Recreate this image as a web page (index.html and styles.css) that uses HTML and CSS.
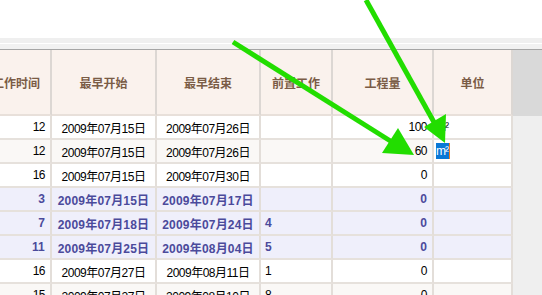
FILE: index.html
```html
<!DOCTYPE html>
<html>
<head>
<meta charset="utf-8">
<link rel="stylesheet" href="styles.css">
</head>
<body>
<div class="top"></div>
<div class="strip1"></div>
<div class="strip-gap"></div>
<div class="strip2"></div>
<div class="area">
  <div class="grid">
    <div class="row head">
      <div class="c">工作时间</div>
      <div class="c">最早开始</div>
      <div class="c">最早结束</div>
      <div class="c">前置工作</div>
      <div class="c">工程量</div>
      <div class="c">单位</div>
    </div>
    <div class="row">
      <div class="c num">12</div>
      <div class="c ctr">2009年07月15日</div>
      <div class="c ctr">2009年07月26日</div>
      <div class="c left"></div>
      <div class="c num">100</div>
      <div class="c left unit">m²</div>
    </div>
    <div class="row alt">
      <div class="c num">12</div>
      <div class="c ctr">2009年07月15日</div>
      <div class="c ctr">2009年07月26日</div>
      <div class="c left"></div>
      <div class="c num">60</div>
      <div class="c left unit edit"><span class="sel">m²</span><span class="caret"></span></div>
    </div>
    <div class="row">
      <div class="c num">16</div>
      <div class="c ctr">2009年07月15日</div>
      <div class="c ctr">2009年07月30日</div>
      <div class="c left"></div>
      <div class="c num">0</div>
      <div class="c left"></div>
    </div>
    <div class="row sum">
      <div class="c num">3</div>
      <div class="c ctr">2009年07月15日</div>
      <div class="c ctr">2009年07月17日</div>
      <div class="c left"></div>
      <div class="c num">0</div>
      <div class="c left"></div>
    </div>
    <div class="row sum">
      <div class="c num">7</div>
      <div class="c ctr">2009年07月18日</div>
      <div class="c ctr">2009年07月24日</div>
      <div class="c left">4</div>
      <div class="c num">0</div>
      <div class="c left"></div>
    </div>
    <div class="row sum">
      <div class="c num">11</div>
      <div class="c ctr">2009年07月25日</div>
      <div class="c ctr">2009年08月04日</div>
      <div class="c left">5</div>
      <div class="c num">0</div>
      <div class="c left"></div>
    </div>
    <div class="row">
      <div class="c num">16</div>
      <div class="c ctr">2009年07月27日</div>
      <div class="c ctr">2009年08月11日</div>
      <div class="c left">1</div>
      <div class="c num">0</div>
      <div class="c left"></div>
    </div>
    <div class="row alt">
      <div class="c num">15</div>
      <div class="c ctr">2009年07月27日</div>
      <div class="c ctr">2009年08月10日</div>
      <div class="c left">8</div>
      <div class="c num">0</div>
      <div class="c left"></div>
    </div>
  </div>
  <div class="filler">
    <div class="filler-head"></div>
    <div class="filler-body"></div>
  </div>
</div>
<svg class="arrows" width="542" height="295" viewBox="0 0 542 295">
  <line x1="233" y1="42" x2="392" y2="142" stroke="#22dd00" stroke-width="5"/>
  <polygon points="414,155 382,153 398,128" fill="#22dd00"/>
  <line x1="366" y1="0" x2="435" y2="124" stroke="#22dd00" stroke-width="5"/>
  <polygon points="445,143 424,127 446,114" fill="#22dd00"/>
</svg>
</body>
</html>
```

FILE: styles.css
```css
html, body {
  margin: 0;
  padding: 0;
  background: #ffffff;
  width: 542px;
  height: 295px;
  overflow: hidden;
  position: relative;
}
.top { height: 38px; background: #ffffff; }
.strip1 { height: 5px; background: #efefef; }
.strip-gap { height: 1px; background: #ffffff; }
.strip2 { height: 5px; background: #f1f1f1; border-bottom: 1px solid #a5a5a5; }
.area {
  display: flex;
  align-items: stretch;
}
.grid {
  margin-left: -18px;
  display: grid;
  grid-template-columns: 70px 105px 104px 72px 101px 79px;
  grid-template-rows: 66px;
  grid-auto-rows: 24px;
  font-family: "Liberation Sans", "Noto Sans CJK SC", sans-serif;
  font-size: 12px;
  color: #000000;
}
.row { display: contents; }
.c {
  box-sizing: border-box;
  border-right: 2px solid #e3ded9;
  border-bottom: 2px solid #e6e1dc;
  display: flex;
  align-items: center;
  background: #ffffff;
  white-space: nowrap;
  overflow: hidden;
  letter-spacing: -0.5px;
}
.head .c {
  height: 66px;
  background: #faf2ed;
  border-right-color: #dcd7d3;
  border-bottom-color: #e8e0da;
  justify-content: center;
  font-family: "Noto Sans CJK SC", sans-serif;
  font-weight: bold;
  font-size: 12px;
  color: #7a5c46;
  letter-spacing: 0;
}
.num { justify-content: flex-end; padding-right: 5px; }
.ctr { justify-content: center; }
.left { justify-content: flex-start; padding-left: 4px; }
.alt .c { background: #faf8f6; }
.sum .c {
  background: #efeffb;
  color: #4b4a9b;
  font-weight: bold;
  letter-spacing: 0.2px;
}
.unit { padding-left: 2px; letter-spacing: -1px; }
.alt .edit { background: #ffffff; }
.sel {
  background: #0a78d6;
  color: #ffffff;
  line-height: 16px;
  padding: 0 1px 0 0;
}
.caret {
  width: 1px;
  height: 16px;
  background: #f07a20;
}
.filler {
  flex: 1;
  display: flex;
  flex-direction: column;
}
.filler-head { height: 66px; background: #d9d9d9; }
.filler-body { flex: 1; background: #efefef; }
.arrows {
  position: absolute;
  left: 0;
  top: 0;
  pointer-events: none;
}
```
